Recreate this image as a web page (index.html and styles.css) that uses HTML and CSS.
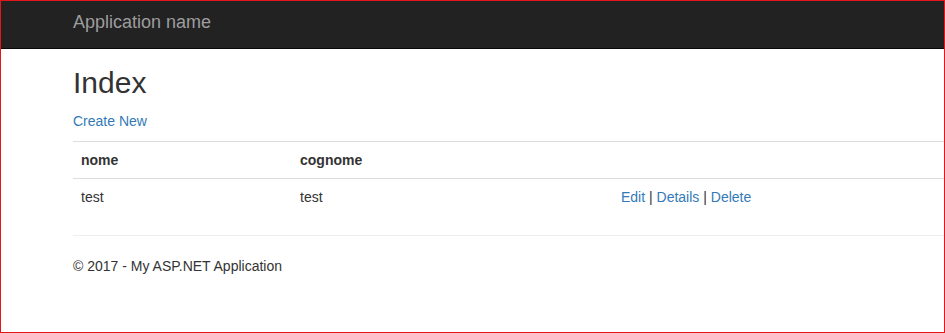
FILE: index.html
```html
<!DOCTYPE html>
<html lang="en">
<head>
<meta charset="utf-8">
<title>Index - My ASP.NET Application</title>
<link rel="stylesheet" href="styles.css">
</head>
<body>
<div class="frame">
  <div class="navbar">
    <a class="brand" href="#">Application name</a>
  </div>
  <div class="body-content">
    <h2 class="title">Index</h2>
    <p class="actions"><a href="#">Create New</a></p>
    <table class="table">
      <tr>
        <th class="col-a">nome</th>
        <th class="col-b">cognome</th>
        <th></th>
      </tr>
      <tr>
        <td>test</td>
        <td>test</td>
        <td><a href="#">Edit</a> | <a href="#">Details</a> | <a href="#">Delete</a></td>
      </tr>
    </table>
    <hr class="rule">
    <footer class="footer">
      <p>&copy; 2017 - My ASP.NET Application</p>
    </footer>
  </div>
</div>
</body>
</html>
```

FILE: styles.css
```css
html, body {
  margin: 0;
  padding: 0;
  background: #fff;
}

body {
  font-family: "Liberation Sans", Arial, Helvetica, sans-serif;
  font-size: 14px;
  line-height: 20px;
  color: #333;
}

.frame {
  box-sizing: border-box;
  width: 945px;
  height: 333px;
  border: 1px solid #e3161b;
  overflow: hidden;
}

.navbar {
  box-sizing: border-box;
  height: 48px;
  background: #222;
  border-bottom: 1px solid #080808;
  padding: 11px 0 0 72px;
}

.brand {
  display: block;
  font-size: 18px;
  line-height: 20px;
  color: #9d9d9d;
  text-decoration: none;
}

.body-content {
  padding-left: 72px;
  width: 1140px;
}

a {
  color: #337ab7;
  text-decoration: none;
}

.title {
  margin: 17px 0 12px;
  font-size: 30px;
  line-height: 33px;
  font-weight: 500;
  color: #333;
}

.actions {
  margin: 0 0 10px;
}

.table {
  width: 100%;
  border-collapse: collapse;
  border-spacing: 0;
  margin-bottom: 20px;
}

.table th,
.table td {
  padding: 8px;
  line-height: 20px;
  text-align: left;
  vertical-align: top;
  border-top: 1px solid #ddd;
}

.table th {
  font-weight: bold;
}

.col-a {
  width: 203px;
}

.col-b {
  width: 305px;
}

.rule {
  margin: 0 0 20px;
  border: 0;
  border-top: 1px solid #eee;
  height: 0;
}

.footer p {
  margin: 0;
}
```
